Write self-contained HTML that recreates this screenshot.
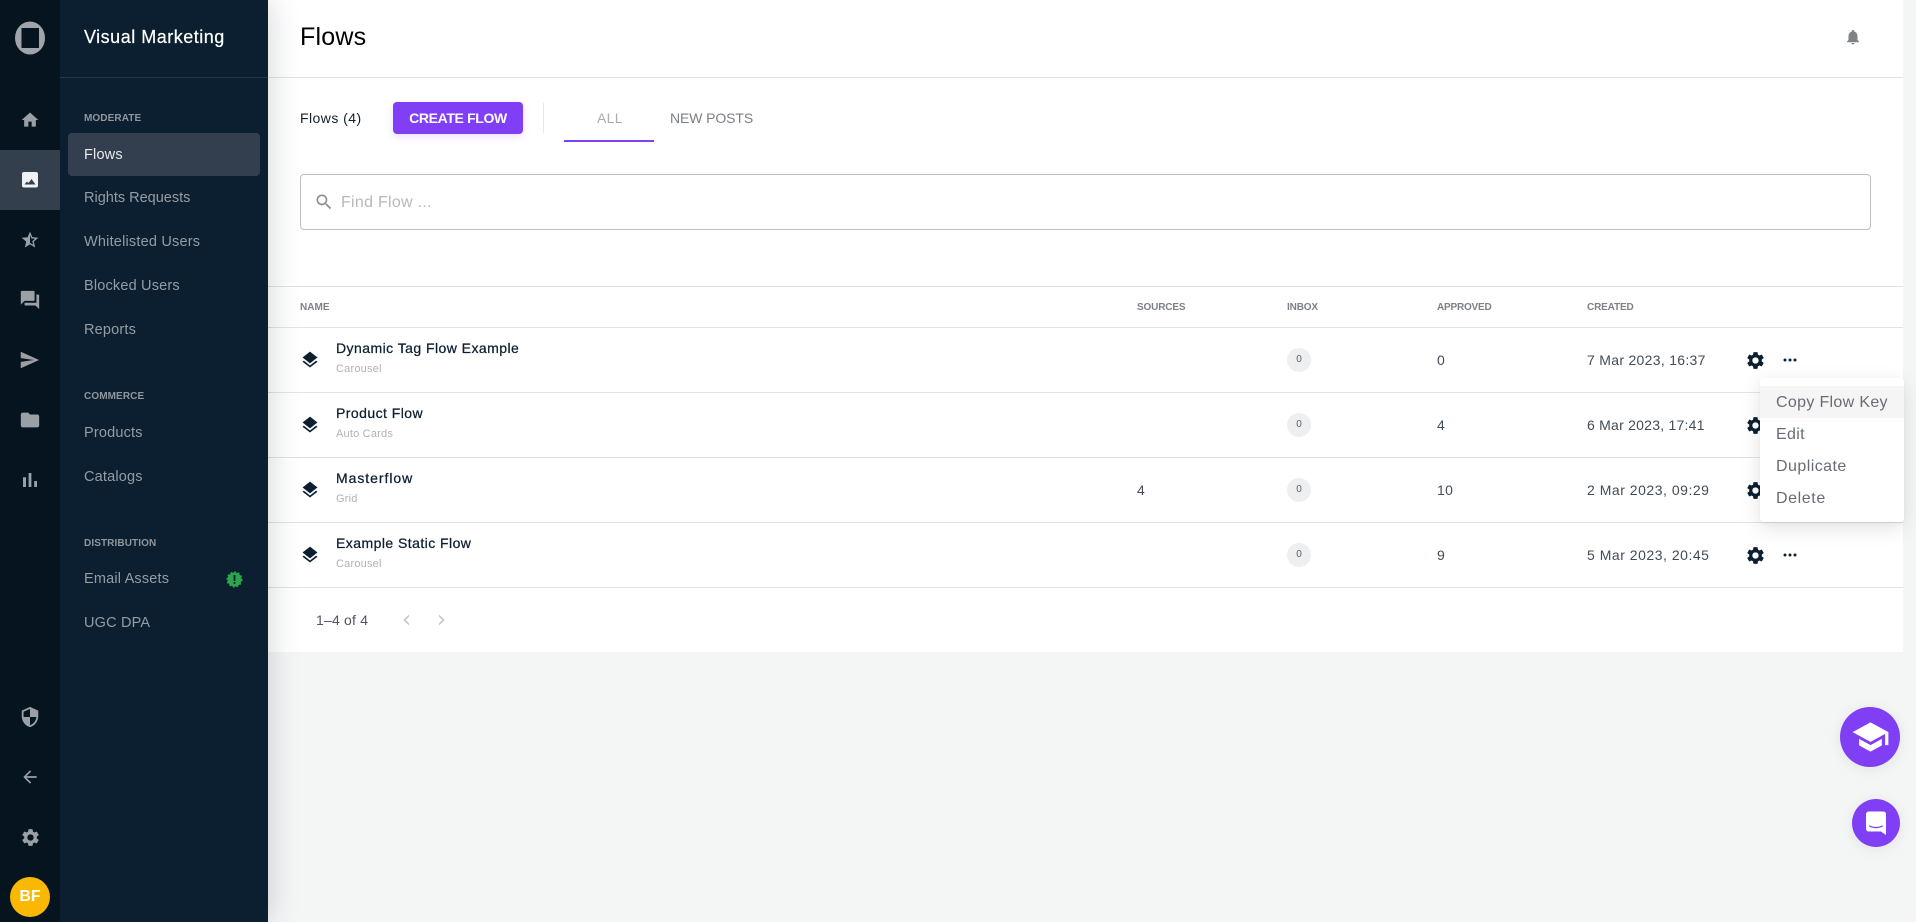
<!DOCTYPE html>
<html lang="en"><head><meta charset="utf-8"><title>Flows</title>
<style>
*{box-sizing:border-box}
html,body{margin:0;padding:0;width:1916px;height:922px;overflow:hidden;background:#f4f6f6;font-family:"Liberation Sans",Arial,sans-serif}
.a,.t{position:absolute}
.t{white-space:nowrap;line-height:20px;height:20px;margin-top:-10px}
svg{position:absolute;display:block}
.n{font-size:14.5px;letter-spacing:.18px;color:#959ca4;left:84px}
.h{font-size:10px;font-weight:700;letter-spacing:.1px;color:#8f969d;left:84px}
.th{font-size:10px;font-weight:700;letter-spacing:-.15px;color:#7c8189;top:308px}
.nm{font-size:14px;font-weight:400;letter-spacing:.45px;color:#0c1f30;left:336px;-webkit-text-stroke:.25px #0c1f30}
.sb{font-size:11px;letter-spacing:.2px;color:#aeb2b6;left:336px}
.v{font-size:14px;letter-spacing:.3px;color:#414c58}
.ln{position:absolute;left:268px;width:1635px;height:1px;background:#e2e3e4}
.bd{position:absolute;left:1287px;width:24px;height:24px;border-radius:50%;background:#eeeff0;color:#555e68;font-size:10px;line-height:24px;text-align:center}
.m{font-size:16px;letter-spacing:.33px;color:#676d75;left:1776px}
.ic{fill:#9ba0a6}
</style></head><body>

<svg width="0" height="0" style="position:absolute">
<symbol id="gear" viewBox="0 0 24 24"><path d="M19.14 12.94c.04-.3.06-.61.06-.94 0-.32-.02-.64-.07-.94l2.03-1.58c.18-.14.23-.41.12-.61l-1.92-3.32c-.12-.22-.37-.29-.59-.22l-2.39.96c-.5-.38-1.03-.7-1.62-.94l-.36-2.54c-.04-.24-.24-.41-.48-.41h-3.84c-.24 0-.43.17-.47.41l-.36 2.54c-.59.24-1.13.57-1.62.94l-2.39-.96c-.22-.08-.47 0-.59.22L2.74 8.87c-.12.21-.08.47.12.61l2.03 1.58c-.05.3-.09.63-.09.94s.02.64.07.94l-2.03 1.58c-.18.14-.23.41-.12.61l1.92 3.32c.12.22.37.29.59.22l2.39-.96c.5.38 1.03.7 1.62.94l.36 2.54c.05.24.24.41.48.41h3.84c.24 0 .44-.17.47-.41l.36-2.54c.59-.24 1.13-.56 1.62-.94l2.39.96c.22.08.47 0 .59-.22l1.92-3.32c.12-.22.07-.47-.12-.61l-2.01-1.58zM12 15.6c-1.98 0-3.6-1.62-3.6-3.6s1.62-3.6 3.6-3.6 3.6 1.62 3.6 3.6-1.62 3.6-3.6 3.6z"/></symbol>
<symbol id="layers" viewBox="0 0 24 24"><path d="M11.99 18.54l-7.37-5.73L3 14.07l9 7 9-7-1.63-1.27-7.38 5.74zM12 16l7.36-5.73L21 9l-9-7-9 7 1.63 1.27L12 16z"/></symbol>
</svg>

<!-- main white -->
<div class="a" style="left:268px;top:0;width:1635px;height:652px;background:#fff"></div>
<div class="ln" style="top:77px"></div>
<div class="ln" style="top:286px"></div>
<div class="ln" style="top:327px"></div>
<div class="ln" style="top:392px"></div>
<div class="ln" style="top:457px"></div>
<div class="ln" style="top:522px"></div>
<div class="ln" style="top:587px"></div>

<!-- sidebars -->
<div class="a" style="left:60px;top:0;width:208px;height:922px;background:#0c1f30;box-shadow:0 0 30px rgba(12,31,48,.2)"></div>
<div class="a" style="left:0;top:0;width:60px;height:922px;background:#05141f"></div>
<div class="a" style="left:0;top:150px;width:60px;height:60px;background:#333f4d"></div>
<div class="a" style="left:60px;top:77px;width:208px;height:1px;background:#27384a"></div>
<div class="a" style="left:68px;top:133px;width:192px;height:43px;background:#333f4e;border-radius:4px"></div>

<!-- logo -->
<svg style="left:15px;top:21px" width="30" height="34" viewBox="0 0 30 34"><ellipse cx="15" cy="17" rx="15" ry="16.5" fill="#a0a5ab"/><rect x="6.5" y="7" width="17.5" height="20" fill="#05141f"/></svg>

<!-- rail icons -->
<svg class="ic" style="left:20px;top:110px" width="20" height="20" viewBox="0 0 24 24"><path d="M10 20v-6h4v6h5v-8h3L12 3 2 12h3v8z"/></svg>
<svg style="left:22px;top:172px" width="16" height="16" viewBox="0 0 16 16"><rect width="16" height="15.500" rx="2" fill="#f0f1f2"/><path fill="#333f4d" d="M2.500 12.500L5 9.500l1.500 1.500L9.500 7l4 5.500z"/></svg>
<svg class="ic" style="left:20px;top:230px" width="20" height="20" viewBox="0 0 24 24"><path d="M22 9.24l-7.19-.62L12 2 9.19 8.63 2 9.24l5.46 4.73L5.82 21 12 17.27 18.18 21l-1.63-7.03L22 9.24zM12 15.4V6.1l1.71 4.04 4.38.38-3.32 2.88 1 4.28L12 15.4z"/></svg>
<svg class="ic" style="left:19px;top:289px" width="22" height="22" viewBox="0 0 24 24"><path d="M21 6h-2v9H6v2c0 .55.45 1 1 1h11l4 4V7c0-.55-.45-1-1-1zm-4 6V3c0-.55-.45-1-1-1H3c-.55 0-1 .45-1 1v14l4-4h10c.55 0 1-.45 1-1z"/></svg>
<svg class="ic" style="left:19px;top:349px" width="21" height="22" viewBox="0 0 24 24" preserveAspectRatio="none"><path d="M2.01 21L23 12 2.01 3 2 10l15 2-15 2z"/></svg>
<svg class="ic" style="left:19px;top:409px" width="22" height="22" viewBox="0 0 24 24"><path d="M10 4H4c-1.1 0-1.99.9-1.99 2L2 18c0 1.1.9 2 2 2h16c1.100 0 2-.9 2-2V8c0-1.100-.9-2-2-2h-8l-2-2z"/></svg>
<svg class="ic" style="left:18px;top:468px" width="24" height="24" viewBox="0 0 24 24"><path d="M5 9.200h3V19H5zM10.600 5h2.800v14h-2.800zm5.600 8H19v6h-2.800z"/></svg>
<svg class="ic" style="left:19px;top:706px" width="22" height="22" viewBox="0 0 24 24"><path d="M12 1L3 5v6c0 5.55 3.84 10.74 9 12 5.16-1.26 9-6.45 9-12V5l-9-4zm0 10.99h7c-.53 4.12-3.28 7.79-7 8.94V12H5V6.3l7-3.11v8.8z"/></svg>
<svg class="ic" style="left:20px;top:767px" width="20" height="20" viewBox="0 0 24 24"><path d="M20 11H7.83l5.59-5.59L12 4l-8 8 8 8 1.41-1.41L7.83 13H20v-2z"/></svg>
<svg class="ic" style="left:19.5px;top:826.500px" width="21" height="21"><use href="#gear"/></svg>
<div class="a" style="left:10px;top:877px;width:40px;height:40px;border-radius:50%;background:#fbb800;color:#fff;font-weight:700;font-size:16px;line-height:40px;text-align:center">BF</div>

<!-- secondary nav -->
<div class="t" style="left:84px;top:37px;font-size:18px;color:#fff;letter-spacing:.5px;-webkit-text-stroke:.2px #fff">Visual Marketing</div>
<div class="t h" style="top:118.500px">MODERATE</div>
<div class="t n" style="top:155px;color:#e8eaec">Flows</div>
<div class="t n" style="top:198px;letter-spacing:0">Rights Requests</div>
<div class="t n" style="top:242px;letter-spacing:.2px">Whitelisted Users</div>
<div class="t n" style="top:286px">Blocked Users</div>
<div class="t n" style="top:330px">Reports</div>
<div class="t h" style="top:396.500px">COMMERCE</div>
<div class="t n" style="top:433px">Products</div>
<div class="t n" style="top:477px">Catalogs</div>
<div class="t h" style="top:543.500px">DISTRIBUTION</div>
<div class="t n" style="top:579px">Email Assets</div>
<div class="t n" style="top:623px">UGC DPA</div>
<svg style="left:226px;top:571px" width="17" height="17" viewBox="0 0 17 17"><circle cx="8.500" cy="8.500" r="7" fill="#2ea44f"/><circle cx="8.500" cy="8.500" r="7.400" fill="none" stroke="#2ea44f" stroke-width="1.200" stroke-dasharray="2 1.800"/><rect x="7.600" y="4" width="1.800" height="6" fill="#0c1f30"/><rect x="7.600" y="11" width="1.800" height="1.800" fill="#0c1f30"/></svg>

<!-- header -->
<div class="t" style="left:300px;top:37px;font-size:25px;letter-spacing:.2px;color:#000;height:30px;line-height:30px;margin-top:-15px">Flows</div>
<svg style="left:1844px;top:28px" width="18" height="18" viewBox="0 0 24 24" fill="#7e8388"><path d="M12 22c1.100 0 2-.9 2-2h-4c0 1.100.89 2 2 2zm6-6v-5c0-3.070-1.640-5.640-4.500-6.320V4c0-.83-.67-1.500-1.500-1.500s-1.500.67-1.500 1.500v.68C7.630 5.360 6 7.920 6 11v5l-2 2v1h16v-1l-2-2z"/></svg>

<div class="t" style="left:300px;top:118px;font-size:14px;color:#15202b;letter-spacing:.45px">Flows (4)</div>
<div class="a" style="left:393px;top:102px;width:130px;height:32px;background:#803ff5;border-radius:4px;box-shadow:0 3px 8px rgba(128,63,245,.16);color:#fff;font-size:14px;font-weight:700;line-height:32px;text-align:center;letter-spacing:-.35px">CREATE FLOW</div>
<div class="a" style="left:543px;top:103px;width:1px;height:30px;background:#e6e7e8"></div>
<div class="t" style="left:597px;top:118px;font-size:14px;color:#a9adb2;letter-spacing:.3px">ALL</div>
<div class="t" style="left:670px;top:118px;font-size:14px;color:#7a8087;letter-spacing:-.1px">NEW POSTS</div>
<div class="a" style="left:564px;top:140px;width:90px;height:2px;background:#7f3ff2"></div>

<div class="a" style="left:300px;top:174px;width:1571px;height:56px;border:1px solid #bdbfc1;border-radius:4px;background:#fff"></div>
<svg style="left:314px;top:192px" width="20" height="20" viewBox="0 0 24 24" fill="#8a8e93"><path d="M15.500 14h-.79l-.28-.27C15.410 12.590 16 11.110 16 9.500 16 5.910 13.090 3 9.500 3S3 5.910 3 9.500 5.910 16 9.500 16c1.610 0 3.090-.59 4.230-1.570l.27.28v.79l5 4.990L20.490 19l-4.990-5zm-6 0C7.010 14 5 11.990 5 9.500S7.010 5 9.500 5 14 7.010 14 9.500 11.990 14 9.500 14z"/></svg>
<div class="t" style="left:341px;top:203px;font-size:16px;color:#b6b8bb;letter-spacing:.28px">Find Flow ...</div>

<!-- table head -->
<div class="t th" style="left:300px;letter-spacing:.05px">NAME</div>
<div class="t th" style="left:1137px">SOURCES</div>
<div class="t th" style="left:1287px">INBOX</div>
<div class="t th" style="left:1437px;letter-spacing:-.2px">APPROVED</div>
<div class="t th" style="left:1587px">CREATED</div>

<!-- rows -->
<svg style="left:300px;top:350px" width="20" height="20" fill="#0c1f30"><use href="#layers"/></svg>
<div class="t nm" style="top:348px">Dynamic Tag Flow Example</div>
<div class="t sb" style="top:368.5px">Carousel</div>
<div class="bd" style="top:348px">0</div>
<div class="t v" style="left:1437px;top:360px">0</div>
<div class="t v" style="left:1587px;top:360px">7 Mar 2023, 16:37</div>

<svg style="left:300px;top:415px" width="20" height="20" fill="#0c1f30"><use href="#layers"/></svg>
<div class="t nm" style="top:413px">Product Flow</div>
<div class="t sb" style="top:433.5px">Auto Cards</div>
<div class="bd" style="top:413px">0</div>
<div class="t v" style="left:1437px;top:425px">4</div>
<div class="t v" style="left:1587px;top:425px;letter-spacing:.24px">6 Mar 2023, 17:41</div>

<svg style="left:300px;top:480px" width="20" height="20" fill="#0c1f30"><use href="#layers"/></svg>
<div class="t nm" style="top:478px;letter-spacing:.95px">Masterflow</div>
<div class="t sb" style="top:498.5px">Grid</div>
<div class="t v" style="left:1137px;top:490px">4</div>
<div class="bd" style="top:478px">0</div>
<div class="t v" style="left:1437px;top:490px">10</div>
<div class="t v" style="left:1587px;top:490px;letter-spacing:.52px">2 Mar 2023, 09:29</div>

<svg style="left:300px;top:545px" width="20" height="20" fill="#0c1f30"><use href="#layers"/></svg>
<div class="t nm" style="top:543px">Example Static Flow</div>
<div class="t sb" style="top:563.5px">Carousel</div>
<div class="bd" style="top:543px">0</div>
<div class="t v" style="left:1437px;top:555px">9</div>
<div class="t v" style="left:1587px;top:555px;letter-spacing:.52px">5 Mar 2023, 20:45</div>

<!-- row actions -->
<svg style="left:1745px;top:350px" width="21" height="21" fill="#0c1f30"><use href="#gear"/></svg>
<svg style="left:1745px;top:415px" width="21" height="21" fill="#0c1f30"><use href="#gear"/></svg>
<svg style="left:1745px;top:480px" width="21" height="21" fill="#0c1f30"><use href="#gear"/></svg>
<svg style="left:1745px;top:545px" width="21" height="21" fill="#0c1f30"><use href="#gear"/></svg>
<svg style="left:1783px;top:353px" width="14" height="14" viewBox="0 0 14 14" fill="#0c1f30"><circle cx="2" cy="7" r="1.500"/><circle cx="7" cy="7" r="1.500"/><circle cx="12" cy="7" r="1.500"/></svg>
<svg style="left:1783px;top:548px" width="14" height="14" viewBox="0 0 14 14" fill="#0c1f30"><circle cx="2" cy="7" r="1.500"/><circle cx="7" cy="7" r="1.500"/><circle cx="12" cy="7" r="1.500"/></svg>

<!-- pagination -->
<div class="t" style="left:316px;top:620px;font-size:14px;color:#4b5661;letter-spacing:.2px">1–4 of 4</div>
<svg style="left:400px;top:612px" width="12" height="16" viewBox="0 0 12 16" fill="none" stroke="#c1c4c7" stroke-width="1.500"><path d="M9 3.500L4.500 8 9 12.500"/></svg>
<svg style="left:436px;top:612px" width="12" height="16" viewBox="0 0 12 16" fill="none" stroke="#c1c4c7" stroke-width="1.500"><path d="M3 3.500L7.500 8 3 12.500"/></svg>

<!-- menu -->
<div class="a" style="left:1760px;top:378px;width:144px;height:144px;background:#fff;border-radius:4px;box-shadow:0 6px 22px rgba(0,0,0,.11),0 2px 4px rgba(0,0,0,.04)"></div>
<div class="a" style="left:1760px;top:386px;width:144px;height:32px;background:#f5f5f5"></div>
<div class="t m" style="top:403px">Copy Flow Key</div>
<div class="t m" style="top:435px">Edit</div>
<div class="t m" style="top:467px;letter-spacing:.45px">Duplicate</div>
<div class="t m" style="top:499px;letter-spacing:.6px">Delete</div>

<!-- FABs -->
<div class="a" style="left:1840px;top:707px;width:60px;height:60px;border-radius:50%;background:#803ff5;box-shadow:0 2px 14px rgba(0,0,0,.08)"></div>
<svg style="left:1851px;top:717px" width="39" height="40" viewBox="0 0 24 24" fill="#fff"><path d="M5 13.180v4L12 21l7-3.820v-4L12 17l-7-3.820zM12 3L1 9l11 6 9-4.910V17h2V9L12 3z"/></svg>
<div class="a" style="left:1852px;top:799px;width:48px;height:48px;border-radius:50%;background:#803ff5;box-shadow:0 2px 14px rgba(0,0,0,.08)"></div>
<svg style="left:1864px;top:811px" width="24" height="24" viewBox="0 0 24 24"><path fill="#fff" d="M2 3.500C2 1.600 3 .5 5 .5h14c2 0 3 1.100 3 3v20.500l-5-3.500H5c-2 0-3-1.100-3-3z"/><path fill="none" stroke="#803ff5" stroke-width="1.200" stroke-linecap="round" d="M5.500 15c4 2.200 9 2.200 13 0"/></svg>

</body></html>
